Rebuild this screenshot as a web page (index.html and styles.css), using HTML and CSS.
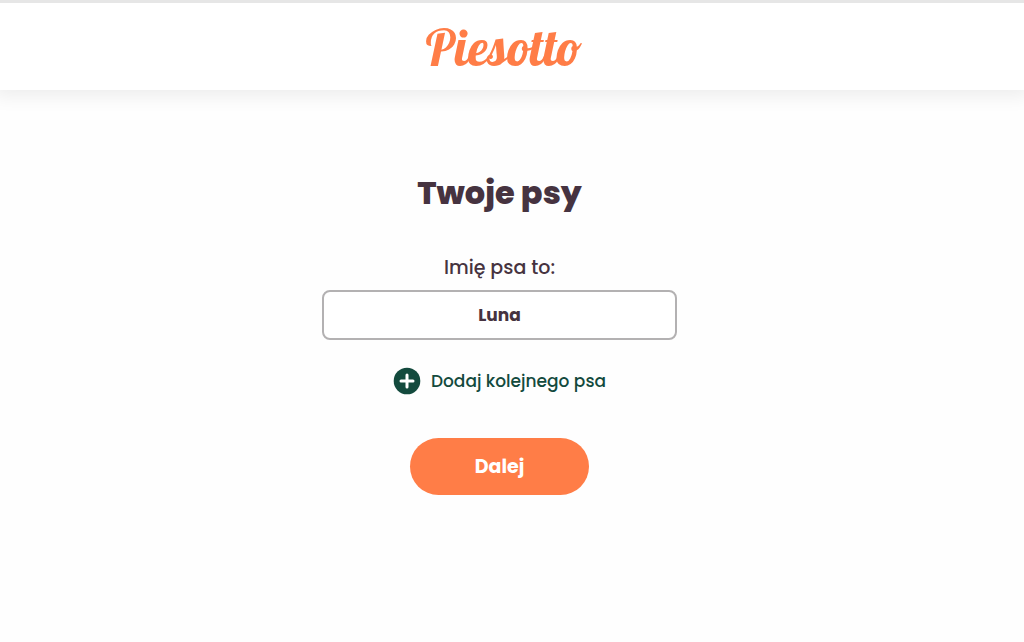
FILE: index.html
```
<!DOCTYPE html>
<html lang="pl">
<head>
    <meta charset="UTF-8">
    <meta name="viewport" content="width=device-width, initial-scale=1.0">
    <title>Piesotto - Twoje psy</title>
    <link rel="stylesheet" href="styles.css">
</head>
<body>
    <header class="header">
        <a href="#" class="logo">Piesotto</a>
    </header>

    <main class="main">
        <h1>Twoje psy</h1>
        <form class="dog-form">
            <label for="dogName">Imię psa to:</label>
            <input type="text" id="dogName" name="dogName" value="Luna">
            <button type="button" class="add-dog">
                <svg class="add-icon" viewBox="0 0 28 28" aria-hidden="true">
                    <circle cx="14" cy="14" r="13.3" fill="#134a3d"/>
                    <path d="M14 8v12M8 14h12" stroke="#fff" stroke-width="3" stroke-linecap="round"/>
                </svg>
                <span>Dodaj kolejnego psa</span>
            </button>
            <button type="submit" class="next">Dalej</button>
        </form>
    </main>
</body>
</html>
```

FILE: styles.css
```
* {
    box-sizing: border-box;
}

body {
    margin: 0;
    background-color: #fefefe;
    color: #463340;
    font-family: Poppins, Inter, sans-serif;
}

.header {
    display: flex;
    justify-content: center;
    align-items: center;
    height: 90px;
    padding-right: 16px;
    border-top: 3px solid #e6e6e6;
    background-color: #fff;
    box-shadow: 0 0 18px 6px rgba(0, 0, 0, 0.07);
}

.logo {
    color: #ff7d47;
    font-family: Lobster, Lato, sans-serif;
    font-size: 51px;
    line-height: 56px;
    text-decoration: none;
}

.main {
    display: flex;
    flex-direction: column;
    align-items: center;
    padding: 79px 25px 40px 0;
}

h1 {
    margin: 0 0 36px;
    font-size: 32px;
    font-weight: 800;
    line-height: 48px;
}

.dog-form {
    display: flex;
    flex-direction: column;
    align-items: center;
    width: 100%;
    max-width: 355px;
}

label {
    margin-bottom: 7px;
    font-size: 19px;
    font-weight: 500;
    line-height: 30px;
}

input[type="text"] {
    width: 100%;
    height: 50px;
    padding: 0 16px;
    border: 2px solid #b3b1b2;
    border-radius: 8px;
    background-color: #fff;
    color: #463340;
    font-family: inherit;
    font-size: 17px;
    font-weight: 700;
    text-align: center;
}

button {
    border: none;
    font-family: inherit;
    cursor: pointer;
}

.add-dog {
    display: flex;
    align-items: center;
    gap: 10px;
    margin: 27px 0 43px;
    padding: 0;
    background: none;
    color: #134a3d;
    font-size: 17px;
    font-weight: 500;
}

.add-icon {
    width: 28px;
    height: 28px;
}

.next {
    padding: 0 65px;
    border-radius: 29px;
    background-color: #ff7d47;
    color: #fff;
    font-size: 19px;
    font-weight: 700;
    line-height: 57px;
}
```
